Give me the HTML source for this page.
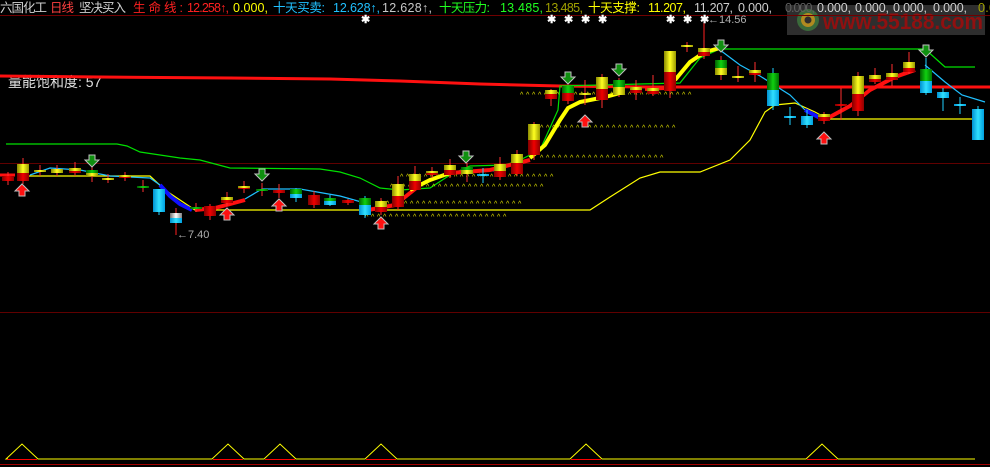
<!DOCTYPE html>
<html><head><meta charset="utf-8"><style>
html,body{margin:0;padding:0;background:#000;width:990px;height:467px;overflow:hidden}
svg{display:block}
text{font-family:"Liberation Sans","Noto Sans CJK SC",sans-serif}
</style></head><body>
<svg id="s" width="990" height="467" viewBox="0 0 990 467" xmlns="http://www.w3.org/2000/svg">
<defs>
<linearGradient id="gY"><stop offset="0" stop-color="#8a8a00"/><stop offset=".5" stop-color="#ffff20"/><stop offset="1" stop-color="#9a9a00"/></linearGradient>
<linearGradient id="gR"><stop offset="0" stop-color="#800000"/><stop offset=".5" stop-color="#f00000"/><stop offset="1" stop-color="#900000"/></linearGradient>
<linearGradient id="gG"><stop offset="0" stop-color="#006000"/><stop offset=".5" stop-color="#10d010"/><stop offset="1" stop-color="#007000"/></linearGradient>
<linearGradient id="gC"><stop offset="0" stop-color="#0090d0"/><stop offset=".5" stop-color="#30e0ff"/><stop offset="1" stop-color="#00a0e0"/></linearGradient>
<linearGradient id="gW"><stop offset="0" stop-color="#707070"/><stop offset=".5" stop-color="#ffffff"/><stop offset="1" stop-color="#808080"/></linearGradient>
</defs>
<rect width="990" height="467" fill="#000"/>
<!-- watermark -->
<rect x="787" y="5" width="198" height="30" fill="#2e2e2e"/>
<circle cx="808" cy="20" r="11" fill="#3a6a3a"/>
<circle cx="808" cy="20" r="7" fill="#b08a20"/>
<circle cx="808" cy="20" r="3.5" fill="#2e2e2e"/>
<text x="823" y="29" font-size="22" font-weight="bold" fill="#901010" textLength="160" lengthAdjust="spacingAndGlyphs">www.55188.com</text>
<!-- grid lines -->
<line x1="0" y1="15.5" x2="990" y2="15.5" stroke="#700000"/>
<line x1="0" y1="163.5" x2="990" y2="163.5" stroke="#600000"/>
<line x1="0" y1="312.5" x2="990" y2="312.5" stroke="#600000"/>
<line x1="0" y1="464.5" x2="990" y2="464.5" stroke="#a00000"/>
<!-- header -->
<g font-size="12.5" lengthAdjust="spacingAndGlyphs">
<text x="0" y="12" fill="#d0d0d0" textLength="47">六国化工</text>
<text x="50" y="12" fill="#ff4040" textLength="24">日线</text>
<text x="79" y="12" fill="#d0d0d0" textLength="47">坚决买入</text>
<text x="133" y="12" fill="#ff2020" textLength="50">生命线:</text>
<text x="187" y="12" fill="#ff2020" textLength="42">12.258↑,</text>
<text x="233" y="12" fill="#ffff00" textLength="35">0.000,</text>
<text x="273" y="12" fill="#20c0ff" textLength="52">十天买卖:</text>
<text x="333" y="12" fill="#20c0ff" textLength="47">12.628↑,</text>
<text x="382" y="12" fill="#c8c8c8" textLength="50">12.628↑,</text>
<text x="439" y="12" fill="#20ff20" textLength="51">十天压力:</text>
<text x="500" y="12" fill="#20ff20" textLength="43">13.485,</text>
<text x="545" y="12" fill="#a0a000" textLength="38">13.485,</text>
<text x="588" y="12" fill="#ffff00" textLength="52">十天支撑:</text>
<text x="648" y="12" fill="#ffff00" textLength="38">11.207,</text>
<text x="694" y="12" fill="#d0d0d0" textLength="39">11.207,</text>
<text x="738" y="12" fill="#d0d0d0" textLength="34">0.000,</text>
<text x="785" y="12" fill="#606060" textLength="30">0.000,</text>
<text x="817" y="12" fill="#d0d0d0" textLength="34">0.000,</text>
<text x="855" y="12" fill="#d0d0d0" textLength="34">0.000,</text>
<text x="893" y="12" fill="#d0d0d0" textLength="34">0.000,</text>
<text x="933" y="12" fill="#d0d0d0" textLength="34">0.000,</text>
<text x="978" y="12" fill="#a0a000" textLength="18">0.0</text>
</g>
<text x="8" y="87" font-size="14" fill="#e0e0e0">量能饱和度: 57</text>
<!-- red long line -->
<polyline points="0,76 100,77 230,78 330,79 400,81 480,84 560,86 650,87 990,87" fill="none" stroke="#ff1010" stroke-width="3"/>
<!-- green band -->
<polyline points="6,144 117,144 127,146 140,152 160,155 180,158 200,160 230,168 320,169 340,172 360,178 380,188 400,190 430,188 450,175 470,166 505,165 520,160 540,150 558,110 560,86 680,83 700,58 720,49 925,49 945,67 975,67" fill="none" stroke="#00e000" stroke-width="1.2"/>
<!-- yellow band -->
<polyline points="20,176 150,176 165,190 195,210 590,210 610,197 640,178 660,172 700,172 730,160 750,140 765,112 775,105 795,103 815,112 828,119 975,119" fill="none" stroke="#ffff00" stroke-width="1.2"/>
<!-- thin cyan -->
<polyline points="30,175 50,168 80,170 110,176 150,178 160,185" fill="none" stroke="#20c0ff" stroke-width="1.2"/>
<polyline points="245,199 262,189 300,189 340,196 365,203" fill="none" stroke="#20c0ff" stroke-width="1.2"/>
<polyline points="470,170 500,171" fill="none" stroke="#20c0ff" stroke-width="1.2"/>
<polyline points="720,50 740,65 760,76 790,95 805,110" fill="none" stroke="#20c0ff" stroke-width="1.2"/>
<polyline points="925,65 945,82 962,95 985,102" fill="none" stroke="#20c0ff" stroke-width="1.2"/>
<!-- thick life line -->
<polyline points="160,185 170,196 180,204 192,210" fill="none" stroke="#1010ff" stroke-width="4"/>
<polyline points="195,210 215,208 245,200" fill="none" stroke="#ff1010" stroke-width="4"/>
<polyline points="0,175 15,175" fill="none" stroke="#ff1010" stroke-width="3"/>
<polyline points="368,210 395,205 420,185" fill="none" stroke="#ff1010" stroke-width="4"/>
<polyline points="410,190 430,180 450,173" fill="none" stroke="#ffff00" stroke-width="4"/>
<polyline points="450,173 490,170 530,160" fill="none" stroke="#ff1010" stroke-width="4"/>
<polyline points="530,158 545,145 560,120 568,108 580,102 605,97 620,93" fill="none" stroke="#ffff00" stroke-width="4"/>
<polyline points="645,89 665,88" fill="none" stroke="#ff1010" stroke-width="4"/>
<polyline points="675,80 690,62 705,52 720,48" fill="none" stroke="#ffff00" stroke-width="4"/>
<polyline points="805,110 820,118" fill="none" stroke="#1010ff" stroke-width="4"/>
<polyline points="828,118 850,106 870,90 895,77 915,70" fill="none" stroke="#ff1010" stroke-width="4"/>
<!-- bottom panel -->
<polyline id="bp" fill="none" stroke="#ffff00" stroke-width="1"/>
<!-- labels -->
<line x1="704" y1="16" x2="704" y2="50" stroke="#ff2020"/>
<text x="708" y="23" font-size="11" fill="#b0b0b0">←14.56</text>
<line x1="176" y1="210" x2="176" y2="235" stroke="#ff2020"/>
<text x="177" y="238" font-size="11" fill="#b0b0b0">←7.40</text>
<g id="dyn"></g>
</svg>
<script>
var NS="http://www.w3.org/2000/svg",g=document.getElementById('dyn');
function el(t,a){var e=document.createElementNS(NS,t);for(var k in a)e.setAttribute(k,a[k]);g.appendChild(e);return e;}
var pts=["8,459"];[22,228,280,381,586,822].forEach(function(c){pts.push((c-16)+",459",c+",444",(c+16)+",459");});pts.push("975,459");
document.getElementById('bp').setAttribute('points',pts.join(' '));
[22,228,280,381,586,822].forEach(function(c){el('line',{x1:c-15,y1:459.5,x2:c+15,y2:459.5,stroke:'#ff0000'});});
[[540,660,156],[540,675,126],[520,690,93],[400,555,175],[390,540,185],[380,520,202],[365,505,215]].forEach(function(d){for(var x=d[0];x<=d[1];x+=6)el('text',{x:x,y:d[2]+4,'font-size':7,fill:'#e0e000'}).textContent='^';});
var C={Y:'url(#gY)',R:'url(#gR)',G:'url(#gG)',C:'url(#gC)',W:'url(#gW)'};
var K=[[8,176,178,181,'R','R',172,185],[23,164,173,181,'Y','R',158,184],[40,170,171,172,'Y','Y',165,176],[57,169,171,173,'Y','Y',165,176],[75,168,171,173,'Y','R',162,176],[92,170,173,176,'G','Y',166,182],[108,178,179,180,'Y','Y',174,183],[125,175,177,178,'Y','R',172,181],[143,186,186,187,'G','G',180,192],[159,189,200,212,'C','C',189,215],[176,213,218,223,'W','C',208,225],[196,207,208,209,'G','G',203,212],[210,206,211,216,'R','R',204,220],[227,197,200,203,'Y','R',192,206],[244,186,188,189,'Y','R',181,193],[262,189,190,191,'G','G',183,196],[279,190,192,193,'R','R',184,198],[296,189,194,198,'G','C',188,202],[314,195,200,205,'R','R',191,208],[330,198,201,205,'G','C',195,206],[348,200,202,203,'R','R',199,205],[365,198,205,215,'G','C',196,218],[381,201,207,212,'Y','R',198,215],[398,184,196,207,'Y','R',176,210],[415,174,181,190,'Y','R',166,190],[432,171,173,175,'Y','R',167,178],[450,165,170,175,'Y','R',159,178],[467,167,170,174,'G','Y',163,182],[483,174,175,176,'C','C',168,183],[500,164,171,177,'Y','R',157,180],[517,154,163,174,'Y','R',150,176],[534,124,140,155,'Y','R',122,160],[551,90,94,99,'Y','R',89,106],[568,86,93,101,'G','R',86,104],[585,93,94,95,'Y','Y',80,105],[602,77,89,100,'Y','R',74,108],[619,80,87,95,'G','Y',78,97],[636,87,90,93,'Y','R',80,100],[653,88,91,94,'Y','R',75,96],[670,51,72,91,'Y','R',51,98],[687,45,46,47,'Y','Y',42,52],[704,48,52,56,'Y','R',40,59],[721,60,68,75,'G','Y',56,80],[738,76,77,78,'Y','C',66,82],[755,70,73,75,'Y','R',62,82],[773,73,90,106,'G','C',68,110],[790,116,116,117,'C','C',107,125],[807,116,120,125,'C','C',110,128],[824,114,117,121,'Y','R',112,124],[841,104,104,105,'R','R',88,120],[858,76,94,111,'Y','R',72,116],[875,75,79,82,'Y','R',68,84],[892,73,77,80,'Y','R',64,86],[909,62,68,72,'Y','R',52,74],[926,69,81,93,'G','C',58,95],[943,92,95,98,'C','C',88,111],[960,104,104,105,'C','C',97,114],[978,109,125,140,'C','C',106,140]];
K.forEach(function(k){var x=k[0];el('line',{x1:x,y1:k[6],x2:x,y2:k[7],stroke:k[4]=='C'||k[4]=='G'&&k[5]=='C'?'#20d0ff':'#ff3030'});
 var w=12;if(k[3]-k[1]<3){el('rect',{x:x-6,y:k[1],width:w,height:Math.max(2,k[3]-k[1]),fill:C[k[4]]});return;}
 el('rect',{x:x-6,y:k[1],width:w,height:k[2]-k[1],fill:C[k[4]]});el('rect',{x:x-6,y:k[2],width:w,height:k[3]-k[2],fill:C[k[5]]});});
function arrow(x,y,up,col){var p=up?[[x,y],[x+7,y+7],[x+3,y+7],[x+3,y+12],[x-3,y+12],[x-3,y+7],[x-7,y+7]]:[[x,y+12],[x+7,y+5],[x+3,y+5],[x+3,y],[x-3,y],[x-3,y+5],[x-7,y+5]];
 el('polygon',{points:p.map(function(a){return a.join(',')}).join(' '),fill:col,stroke:'#c0c0c0','stroke-width':1});}
[[22,184],[227,208],[279,199],[381,217],[585,115],[824,132]].forEach(function(a){arrow(a[0],a[1],1,'#ff1010');});
[[92,155],[262,169],[466,151],[568,72],[619,64],[721,40],[926,45]].forEach(function(a){arrow(a[0],a[1],0,'#109010');});
[365,551,568,585,602,670,687,704].forEach(function(x){el('text',{x:x-4,y:23,'font-size':11,fill:'#ffffff','font-weight':'bold'}).textContent='✱';});
</script>
</body></html>
